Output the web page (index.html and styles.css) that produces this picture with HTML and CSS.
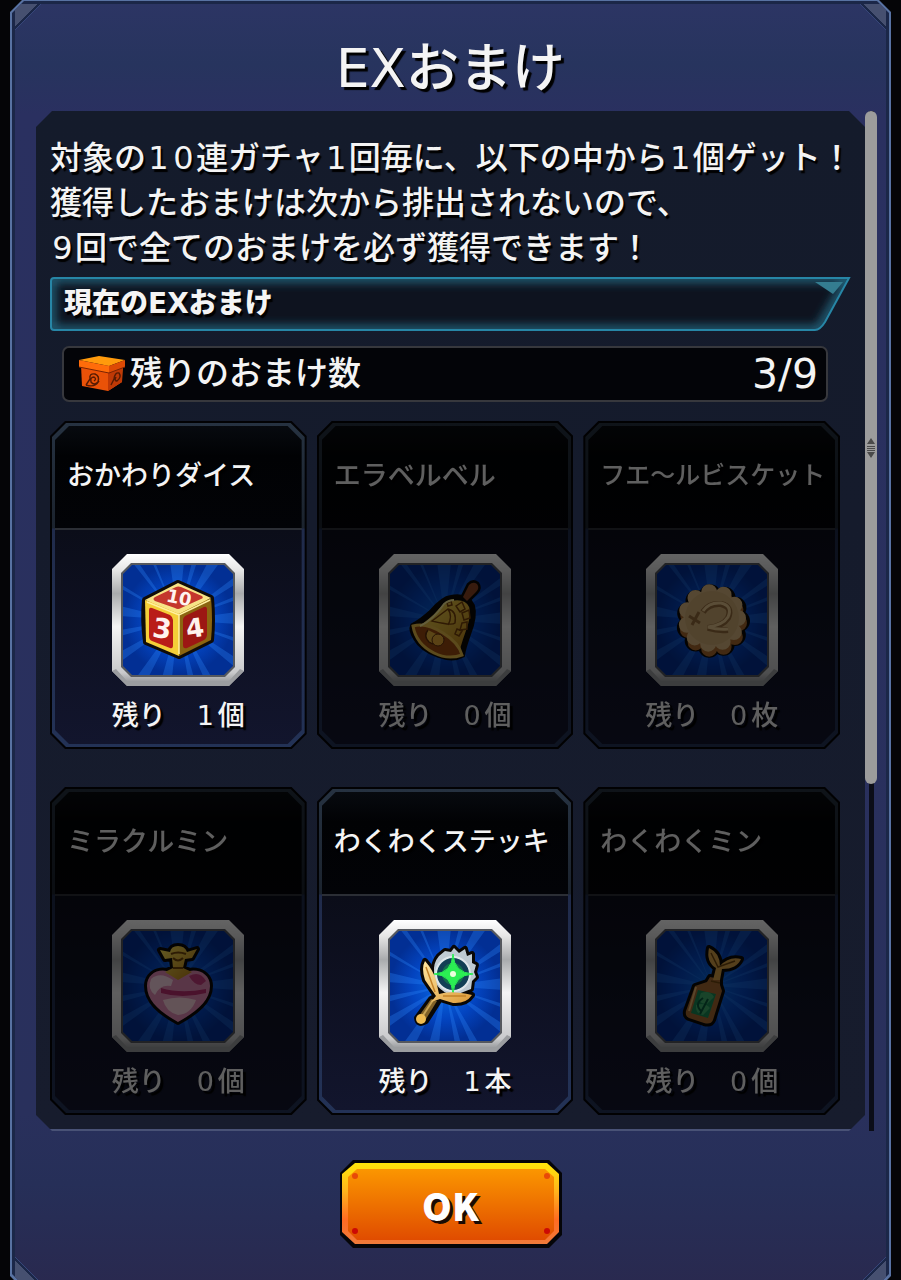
FILE: index.html
```html
<!DOCTYPE html>
<html lang="ja">
<head>
    <meta charset="UTF-8">
    <meta name="viewport" content="width=device-width, initial-scale=1.0">
    <title>EXおまけ</title>
    <link rel="stylesheet" href="styles.css">
</head>
<body>

    <!-- 共通パーツ -->
    <svg class="defs" width="0" height="0" aria-hidden="true">
        <defs>
            <linearGradient id="silver" x1="0" y1="0" x2="0" y2="1">
                <stop offset="0" stop-color="#ffffff"/>
                <stop offset=".12" stop-color="#e6e6e6"/>
                <stop offset=".3" stop-color="#a9abad"/>
                <stop offset=".55" stop-color="#f4f4f4"/>
                <stop offset=".9" stop-color="#c9cacc"/>
                <stop offset="1" stop-color="#85878a"/>
            </linearGradient>
            <radialGradient id="blue">
                <stop offset="0" stop-color="#0a6ee8"/>
                <stop offset=".6" stop-color="#0344c0"/>
                <stop offset="1" stop-color="#022f94"/>
            </radialGradient>
            <linearGradient id="gold" x1="0" y1="0" x2="1" y2="1">
                <stop offset="0" stop-color="#ffe75a"/>
                <stop offset="1" stop-color="#b87a12"/>
            </linearGradient>
            <linearGradient id="leaf" x1="0" y1="0" x2="1" y2="1">
                <stop offset="0" stop-color="#ffe6a0"/>
                <stop offset="1" stop-color="#dc9a38"/>
            </linearGradient>
            <clipPath id="inside">
                <path d="M20 11H112L121 20V112L112 121H20L11 112V20Z"/>
            </clipPath>
            <symbol id="frame" viewBox="0 0 132 132">
                <path d="M15 0H117L132 15V117L117 132H15L0 117V15Z" fill="url(#silver)"/>
                <path d="M15 127H117L128 115L132 117L117 132H15L0 117L4 115Z" fill="#9b9da0"/>
                <path d="M19 9H113L123 19V113L113 123H19L9 113V19Z" fill="#55585e"/>
                <path d="M20 11H112L121 20V112L112 121H20L11 112V20Z" fill="url(#blue)"/>
                <g clip-path="url(#inside)" fill="#2f8cff" opacity=".3">
                    <path d="M66 66L58 8H72Z"/>
                    <path d="M66 66L80 8H85Z"/>
                    <path d="M66 66L96 8H108Z"/>
                    <path d="M66 66L124 22V30Z"/>
                    <path d="M66 66L124 42V46Z"/>
                    <path d="M66 66L124 58V70Z"/>
                    <path d="M66 66L124 84V88Z"/>
                    <path d="M66 66L124 104V114Z"/>
                    <path d="M66 66L100 124H92Z"/>
                    <path d="M66 66L82 124H76Z"/>
                    <path d="M66 66L60 124H50Z"/>
                    <path d="M66 66L36 124H24Z"/>
                    <path d="M66 66L8 108V98Z"/>
                    <path d="M66 66L8 82V76Z"/>
                    <path d="M66 66L8 62V52Z"/>
                    <path d="M66 66L8 34V30Z"/>
                    <path d="M66 66L20 8H26Z"/>
                    <path d="M66 66L40 8H43Z"/>
                </g>
            </symbol>
        </defs>
    </svg>

    <main class="panel">
        <div class="panel-inner">
            <h1>EXおまけ</h1>

            <div class="scroll-area">
                <div class="content">
                    <p class="description">対象の<span class="num">1</span><span class="num">0</span>連ガチャ<span class="num">1</span>回毎に、以下の中から<span class="num">1</span>個ゲット！<br>獲得したおまけは次から排出されないので、<br><span class="num">9</span>回で全てのおまけを必ず獲得できます！</p>

                    <div class="section-title">
                        <svg viewBox="0 0 801 54" preserveAspectRatio="none" aria-hidden="true">
                            <defs>
                                <clipPath id="bar"><path d="M4 1H799L775 45Q770 53 765 53H4Q1 53 1 50V4Q1 1 4 1Z"/></clipPath>
                                <filter id="glow"><feGaussianBlur stdDeviation="5"/></filter>
                            </defs>
                            <g clip-path="url(#bar)">
                                <path d="M0 0H801V54H0Z" fill="#0e131f"/>
                                <path d="M1 1H799L769 53H1Z" fill="none" stroke="#20627a" stroke-width="9" filter="url(#glow)"/>
                                <path d="M765 5H793L783 17Z" fill="#347d90"/>
                            </g>
                            <path d="M4 1H799L775 45Q770 53 765 53H4Q1 53 1 50V4Q1 1 4 1Z" fill="none" stroke="#2786a6" stroke-width="2"/>
                        </svg>
                        <h2>現在のEXおまけ</h2>
                    </div>

                    <div class="remain">
                        <svg class="box-icon" viewBox="0 0 48 38" aria-hidden="true">
                            <path d="M3 10L4 31L30 36L44 27L45 11Z" fill="#ea5208"/>
                            <path d="M30 17L44 10V27L30 36Z" fill="#bf3906"/>
                            <path d="M1 5L21 1L47 5L31 11Z" fill="#ff9a0c"/>
                            <path d="M1 5L31 11V18L1 12Z" fill="#ff6c0a"/>
                            <path d="M31 11L47 5V12L31 18Z" fill="#dd4a05"/>
                            <path d="M1 12L31 18L47 12" fill="none" stroke="#7a2404"/>
                            <path d="M8 30L12 24Q11 18 17 19Q22 21 20 27Q16 31 13 27Q12 22 16 22Q19 24 16 26M8 30Q17 33 21 26M33 30L36 24Q37 17 41 18Q44 22 39 26Q36 26 38 22" fill="none" stroke="#571b03" stroke-width="1.4"/>
                        </svg>
                        <span class="remain-label">残りのおまけ数</span>
                        <span class="remain-count">3/9</span>
                    </div>

                    <ul class="cards">
                        <li class="card">
                            <h3>おかわりダイス</h3>
                            <svg class="item" viewBox="0 0 132 132" aria-hidden="true">
                                <use href="#frame"/>
                                <path d="M66 29L99 44Q101 66 99 86L67 102L34 88Q31 66 33 46Z" fill="#e8bb2a" stroke="#100c08" stroke-width="6" stroke-linejoin="round"/>
                                <path d="M66 29L99 44L67 60L33 46Z" fill="#f7e487"/>
                                <path d="M67 60L99 44Q101 66 99 86L67 102Z" fill="#8b6510"/>
                                <path d="M33 46L67 60V102L34 88Z" fill="#f4cf38"/>
                                <path d="M64 33Q66 32 69 33L90 42Q92 44 89 45L69 54Q66 56 63 54L43 47Q40 45 43 43Z" fill="#c4372c"/>
                                <path d="M40 54L58 61Q61 63 61 66V91Q61 95 58 94L40 87Q37 86 37 82V56Q37 53 40 54Z" fill="#b91d18"/>
                                <path d="M75 61L92 53Q95 52 95 56V80Q95 84 92 86L75 94Q71 95 71 91V66Q71 63 75 61Z" fill="#9c1713"/>
                                <path d="M35 48L67 61L98 46M67 61V100" fill="none" stroke="#fff0a0" stroke-width="1.5"/>
                                <text x="67" y="50" class="pip" font-size="18" transform="rotate(12 67 44)">10</text>
                                <text x="50" y="84" class="pip" font-size="27" transform="rotate(8 50 76)">3</text>
                                <text x="83" y="83" class="pip" font-size="26" transform="rotate(-8 83 75)">4</text>
                            </svg>
                            <p>残り　<span class="count">1</span>個</p>
                        </li>

                        <li class="card empty">
                            <h3>エラベルベル</h3>
                            <svg class="item" viewBox="0 0 132 132" aria-hidden="true">
                                <use href="#frame"/>
                                <path d="M84 43L90 31Q94 27 98 30Q101 34 97 38L88 47Z" fill="#8c4524" stroke="#0a0806" stroke-width="5"/>
                                <path d="M34 72Q42 68 53 58Q64 45 72 44Q88 41 93 52Q96 62 89 80Q84 94 83 101Q74 106 60 101Q43 95 37 84Q32 76 34 72Z" fill="url(#gold)" stroke="#0a0806" stroke-width="6"/>
                                <path d="M84 43L90 31Q94 27 98 30Q101 34 97 38L88 47Z" fill="#8c4524"/>
                                <path d="M34 72Q47 68 64 79Q80 89 83 101Q69 106 55 99Q37 90 34 72Z" fill="#9c4b10" stroke="#e9bd48" stroke-width="3"/>
                                <path d="M49 76Q44 82 50 88Q58 94 65 84" fill="#e8b43a" stroke="#5d2e0a" stroke-width="1.5"/>
                                <circle cx="59" cy="86" r="6" fill="#e8a936" stroke="#5d2e0a"/>
                                <path d="M53 67L69 55Q78 57 76 69Q73 72 53 67ZM69 55Q74 62 69 71M77 52L83 48L86 55L81 58ZM83 59L90 56L91 64L85 66ZM83 69L88 68L88 75L81 76ZM68 49L72 47L73 51L69 52ZM78 75L83 77L80 82L76 80Z" fill="none" stroke="#78420a" stroke-width="1.5"/>
                                <path d="M41 72Q54 66 65 50Q70 46 75 46" fill="none" stroke="#fff09b" stroke-width="2"/>
                            </svg>
                            <p>残り　<span class="count">0</span>個</p>
                        </li>

                        <li class="card empty">
                            <h3 class="long">フエ～ルビスケット</h3>
                            <svg class="item" viewBox="0 0 132 132" aria-hidden="true">
                                <use href="#frame"/>
                                <circle cx="67" cy="67" r="26" fill="none" stroke="#0a0806" stroke-width="22" stroke-linecap="round" stroke-dasharray="0 14.85"/>
                                <circle cx="67" cy="69" r="26" fill="#a8692e" stroke="#a8692e" stroke-width="16" stroke-linecap="round" stroke-dasharray="0 14.85"/>
                                <circle cx="66" cy="64" r="26" fill="#d9b780" stroke="#d9b780" stroke-width="16" stroke-linecap="round" stroke-dasharray="0 14.85"/>
                                <circle cx="66" cy="64" r="27" fill="#cfab74"/>
                                <path d="M57 58Q63 49 75 50Q87 53 82 64Q77 72 62 74Q72 77 82 76" fill="none" stroke="#966c3a" stroke-width="6"/>
                                <path d="M57 57Q63 48 75 49Q87 52 82 63Q77 71 62 73Q72 76 82 75" fill="none" stroke="#e6c68e" stroke-width="3"/>
                                <path d="M43 62L54 69M53 58L46 71" stroke="#966c3a" stroke-width="3"/>
                            </svg>
                            <p>残り　<span class="count">0</span>枚</p>
                        </li>

                        <li class="card empty">
                            <h3>ミラクルミン</h3>
                            <svg class="item" viewBox="0 0 132 132" aria-hidden="true">
                                <use href="#frame"/>
                                <g stroke="#0a0806" stroke-width="6" stroke-linejoin="round">
                                    <path d="M66 102C48 92 35 81 35 66C35 51 53 45 66 57C79 45 98 51 98 66C98 81 84 92 66 102Z"/>
                                    <path d="M60 38L53 39L48 30L58 32Q59 26 66 26Q73 26 75 32L85 29L80 38L73 39L71 48L80 52L66 60L53 52L61 48Z"/>
                                </g>
                                <path d="M66 102C48 92 35 81 35 66C35 51 53 45 66 57C79 45 98 51 98 66C98 81 84 92 66 102Z" fill="#e58bb6"/>
                                <path d="M39 59Q48 51 61 60L59 66Q48 64 43 75Q35 69 39 59Z" fill="#ffd7e6"/>
                                <path d="M77 56Q88 50 94 61L89 65Q82 65 77 56Z" fill="#c63c7d"/>
                                <path d="M49 68Q69 74 94 69V73Q70 79 49 73Z" fill="#bd2d70"/>
                                <path d="M51 80Q68 75 84 80Q79 94 66 95Q54 92 51 80Z" fill="#ffd5df"/>
                                <path d="M60 38L53 39L48 30L58 32Q59 26 66 26Q73 26 75 32L85 29L80 38L73 39L71 48L80 52L66 60L53 52L61 48Z" fill="url(#gold)"/>
                                <path d="M59 34Q66 31 74 34M61 38Q66 43 71 38M61 48H71" fill="none" stroke="#724609" stroke-width="2"/>
                            </svg>
                            <p>残り　<span class="count">0</span>個</p>
                        </li>

                        <li class="card">
                            <h3>わくわくステッキ</h3>
                            <svg class="item" viewBox="0 0 132 132" aria-hidden="true">
                                <use href="#frame"/>
                                <g stroke="#0a0806" stroke-width="6" stroke-linejoin="round">
                                    <path d="M60 36L66 31L72 32L75 28L80 33L86 29L88 36L93 34L93 43L97 45L95 52L97 57L93 61L92 69L74 76Q54 69 55 53Q54 43 60 36Z"/>
                                    <path d="M57 76L46 60Q42 48 46 41Q54 50 57 60L60 74Q72 70 93 75Q87 84 74 83L61 79L47 101Q39 106 38 98L52 79Z"/>
                                </g>
                                <path d="M60 36L66 31L72 32L75 28L80 33L86 29L88 36L93 34L93 43L97 45L95 52L97 57L93 61L92 69L74 76Q54 69 55 53Q54 43 60 36Z" fill="#bfcbd3"/>
                                <circle cx="74" cy="54" r="17" fill="#123f55" stroke="#dfe7eb" stroke-width="2"/>
                                <circle cx="74" cy="54" r="11" fill="#128d48" opacity=".6"/>
                                <path d="M74 34Q75 53 94 54Q75 55 74 74Q73 55 55 54Q73 53 74 34Z" fill="#2bee53" stroke="#2bee53"/>
                                <circle cx="74" cy="54" r="3" fill="#eaffdc"/>
                                <path d="M52 79L58 81L47 99L40 96Z" fill="#806127"/>
                                <path d="M54 80L43 97" stroke="#c7a354" stroke-width="2"/>
                                <circle cx="42" cy="99" r="5" fill="#f0bc52"/>
                                <path d="M57 76L46 60Q42 48 46 41Q54 50 57 60L60 74Q72 70 93 75Q87 84 74 83L61 79L52 82Z" fill="url(#leaf)"/>
                                <path d="M47 47L56 72M64 76L87 76" stroke="#c38228" stroke-width="1.5"/>
                            </svg>
                            <p>残り　<span class="count">1</span>本</p>
                        </li>

                        <li class="card empty">
                            <h3>わくわくミン</h3>
                            <svg class="item" viewBox="0 0 132 132" aria-hidden="true">
                                <use href="#frame"/>
                                <g stroke="#0a0806" stroke-width="6" stroke-linejoin="round">
                                    <path d="M64 57L74 59L74 65L76 71L67 100Q65 105 58 103L43 98Q39 96 40 91L49 66L61 62Z"/>
                                    <path d="M70 48Q60 42 63 28Q74 33 74 46Q83 36 95 39Q91 49 76 49L74 60H67Z"/>
                                </g>
                                <path d="M64 57L74 59L74 65L76 71L67 100Q65 105 58 103L43 98Q39 96 40 91L49 66L61 62Z" fill="#a66a31"/>
                                <path d="M52 70L70 74L62 98L45 93Z" fill="#168b55"/>
                                <path d="M55 73Q64 70 68 77L61 84Q50 84 55 73ZM50 85Q59 82 64 88L57 95Q49 94 50 85Z" fill="#3fae6c"/>
                                <path d="M57 78Q48 84 55 91M62 79L54 94" fill="none" stroke="#075b3c" stroke-width="2"/>
                                <path d="M50 67L43 91" stroke="#e4b16c" stroke-width="2"/>
                                <path d="M70 48Q60 42 63 28Q74 33 74 46Q83 36 95 39Q91 49 76 49L74 60H67Z" fill="#d7a247"/>
                                <path d="M65 33L72 47L89 41M65 61L74 63" fill="none" stroke="#70470f" stroke-width="1.5"/>
                            </svg>
                            <p>残り　<span class="count">0</span>個</p>
                        </li>
                    </ul>
                </div>

                <div class="scrollbar">
                    <div class="thumb">
                        <svg viewBox="0 0 8 20" width="8" height="20" aria-hidden="true">
                            <path d="M4 0L8 6H0ZM4 20L8 14H0ZM0 8H8V9H0ZM0 10H8V11H0ZM0 12H8V13H0Z" fill="#4a4a4a"/>
                        </svg>
                    </div>
                </div>
            </div>

            <button type="button" class="ok-btn">
                <svg viewBox="0 0 222 88" aria-hidden="true">
                    <defs>
                        <linearGradient id="okEdge" x1="0" y1="0" x2="0" y2="1">
                            <stop offset="0" stop-color="#ffe60a"/>
                            <stop offset=".35" stop-color="#ffb41c"/>
                            <stop offset=".7" stop-color="#ff6b22"/>
                            <stop offset="1" stop-color="#ef7a3a"/>
                        </linearGradient>
                        <linearGradient id="okFace" x1="0" y1="0" x2="0" y2="1">
                            <stop offset="0" stop-color="#fb9600"/>
                            <stop offset="1" stop-color="#e04c00"/>
                        </linearGradient>
                    </defs>
                    <path d="M13 0H209L222 13V75L209 88H13L0 75V13Z" fill="#050508"/>
                    <path d="M15 3H207L219 14V72L207 84H15L2 72V14Z" fill="url(#okEdge)"/>
                    <path d="M17 9H205L214 17V71L205 80H17L8 71V17Z" fill="url(#okFace)"/>
                    <g fill="#e84a08">
                        <circle cx="15" cy="16" r="3"/>
                        <circle cx="207" cy="16" r="3"/>
                    </g>
                    <g fill="#cc0a04">
                        <circle cx="15" cy="71" r="3"/>
                        <circle cx="207" cy="71" r="3"/>
                    </g>
                </svg>
                <span>OK</span>
            </button>
        </div>
    </main>

</body>
</html>
```
FILE: styles.css
```css
/* 全体 */
* {
    box-sizing: border-box;
}

body {
    margin: 0;
    background-color: #050507;
    color: #f4f4f4;
    font-family: "DejaVu Sans", "Noto Sans CJK JP", sans-serif;
    font-weight: 500;
    overflow: hidden;
}

h1, h2, h3, p, ul {
    margin: 0;
    padding: 0;
}

.defs {
    position: absolute;
}

/* パネル */
.panel {
    min-height: calc(100vh + 8px);
    margin: 0 10px;
    padding: 1px 2px 2px;
    display: flex;
    background-color: #5872a2;
    clip-path: polygon(12px 0, calc(100% - 12px) 0, 100% 12px, 100% calc(100% - 12px), calc(100% - 12px) 100%, 12px 100%, 0 calc(100% - 12px), 0 12px);
}

.panel-inner {
    flex: 1;
    min-width: 0;
    display: flex;
    flex-direction: column;
    align-items: center;
    padding: 0 9px 0 21px;
    border: 3px solid #1b2748;
    background:
        linear-gradient(135deg, #465070 16px, #1b2748 16px, #1b2748 18px, #36467a 18px, #36467a 19px, transparent 19px),
        linear-gradient(225deg, #465070 16px, #1b2748 16px, #1b2748 18px, #36467a 18px, #36467a 19px, transparent 19px),
        linear-gradient(45deg, #465070 16px, #1b2748 16px, #1b2748 18px, #36467a 18px, #36467a 19px, transparent 19px),
        linear-gradient(315deg, #465070 16px, #1b2748 16px, #1b2748 18px, #36467a 18px, #36467a 19px, transparent 19px),
        linear-gradient(#2c3564, #27345e 60px, #2a3060 110px, #29305c 1110px, #262f58 1180px, #29294f);
    clip-path: polygon(12px 0, calc(100% - 12px) 0, 100% 12px, 100% calc(100% - 12px), calc(100% - 12px) 100%, 12px 100%, 0 calc(100% - 12px), 0 12px);
}

h1 {
    height: 107px;
    padding-right: 12px;
    font-size: 53px;
    font-weight: 500;
    line-height: 130px;
    text-shadow: 3px 3px 1px #000;
}

/* スクロール領域 */
.scroll-area {
    align-self: stretch;
    display: flex;
}

.content {
    flex: 1;
    min-width: 0;
    padding: 25px 14px 16px;
    background: linear-gradient(to top, #495276 2px, #171c2d 2px, #151b2c 60%, #141b2b);
    clip-path: polygon(16px 0, calc(100% - 16px) 0, 100% 16px, 100% calc(100% - 16px), calc(100% - 16px) 100%, 16px 100%, 0 calc(100% - 16px), 0 16px);
}

.scrollbar {
    width: 12px;
    background: linear-gradient(to right, transparent 4px, #0b0d18 4px, #0b0d18 9px, transparent 9px);
}

.thumb {
    height: 66%;
    display: flex;
    align-items: center;
    justify-content: center;
    border-radius: 6px;
    background-color: #9c9c9c;
}

.description {
    font-size: 32px;
    line-height: 45px;
    white-space: nowrap;
    text-shadow: 2px 3px 1px #000;
}

.num {
    display: inline-block;
    width: 25px;
    text-align: center;
}

/* 見出し */
.section-title {
    position: relative;
    height: 54px;
    margin-top: 6px;
    padding-left: 14px;
}

.section-title svg {
    position: absolute;
    inset: 0;
    width: 100%;
    height: 100%;
}

h2 {
    position: relative;
    font-size: 28px;
    font-weight: 900;
    line-height: 54px;
    text-shadow: 2px 3px 1px #000;
}

/* 残り数 */
.remain {
    display: flex;
    align-items: center;
    height: 56px;
    margin: 15px 23px 0 12px;
    padding: 0 8px 0 14px;
    border: 2px solid #37383d;
    border-radius: 7px;
    background-color: #030408;
}

.box-icon {
    width: 48px;
    height: 38px;
}

.remain-label {
    flex: 1;
    padding-left: 4px;
    font-size: 33px;
    line-height: 52px;
}

.remain-count {
    font-size: 41px;
    line-height: 52px;
}

/* カード */
.cards {
    display: grid;
    grid-template-columns: repeat(3, 1fr);
    gap: 38px 10px;
    margin: 19px 11px 0 0;
    list-style: none;
}

.card {
    position: relative;
    isolation: isolate;
    display: flex;
    flex-direction: column;
    align-items: center;
    height: 328px;
    background-color: #020204;
    clip-path: polygon(15px 0, calc(100% - 15px) 0, 100% 15px, 100% calc(100% - 15px), calc(100% - 15px) 100%, 15px 100%, 0 calc(100% - 15px), 0 15px);
}

.card::before,
.card::after {
    content: "";
    position: absolute;
    z-index: -1;
    clip-path: polygon(14px 0, calc(100% - 14px) 0, 100% 14px, 100% calc(100% - 14px), calc(100% - 14px) 100%, 14px 100%, 0 calc(100% - 14px), 0 14px);
}

.card::before {
    inset: 2px;
    background: linear-gradient(#263241, #1b232e 105px, #202b4b 106px, #233256);
}

.card::after {
    inset: 5px;
    background: linear-gradient(#070a0f, #010204 30px, #020307 102px, #2b2e35 102px, #2b2e35 104px, #0b0d19 104px, #12152d);
}

.card h3 {
    align-self: stretch;
    height: 133px;
    padding-left: 17px;
    font-size: 27px;
    font-weight: 500;
    line-height: 110px;
    white-space: nowrap;
    text-shadow: 2px 3px 1px #000;
}

.card h3.long {
    font-size: 25px;
}

.card p {
    font-size: 27px;
    line-height: 60px;
    text-shadow: 3px 3px 1px #000;
}

.item {
    width: 132px;
    height: 132px;
}

.count {
    display: inline-block;
    width: 25px;
    text-align: center;
}

.pip {
    fill: #fff3ee;
    font-family: "DejaVu Sans", sans-serif;
    font-weight: bold;
    text-anchor: middle;
}

.empty {
    filter: brightness(0.39);
}

/* OKボタン */
.ok-btn {
    position: relative;
    width: 222px;
    height: 88px;
    margin: 29px 12px 0 0;
    padding: 0;
    border: none;
    background: none;
    color: #fff;
    font-family: "Noto Sans CJK JP", sans-serif;
    font-size: 38px;
    font-weight: 900;
    cursor: pointer;
}

.ok-btn svg {
    position: absolute;
    inset: 0;
}

.ok-btn span {
    position: relative;
    text-shadow: 3px 3px 0 #1a0a04;
}

.ok-btn:hover {
    filter: brightness(1.1);
}

@media (max-width: 860px) {
    .description {
        font-size: 24px;
        line-height: 36px;
        white-space: normal;
    }

    .cards {
        grid-template-columns: repeat(auto-fill, minmax(240px, 1fr));
    }

    body {
        overflow: auto;
    }
}
```
